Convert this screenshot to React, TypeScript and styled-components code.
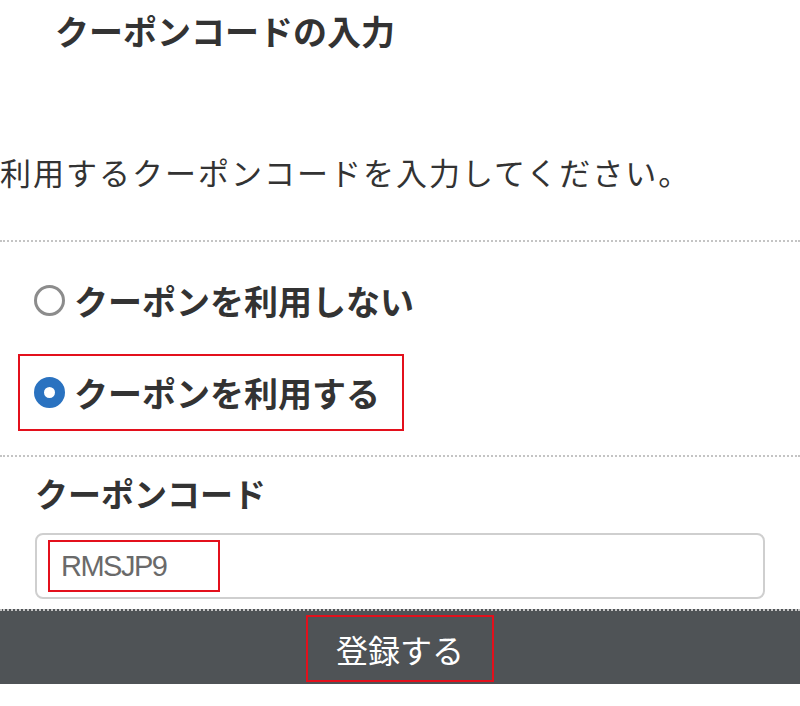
import React from 'react';
import styled, { createGlobalStyle } from 'styled-components';

const GlobalStyle = createGlobalStyle`
  html, body {
    margin: 0;
    padding: 0;
    background: #fff;
  }
  body {
    font-family: "Noto Sans CJK JP", "Noto Sans", sans-serif;
    color: #333;
  }
`;

const MARK = '#e3101c';

const App = () => {
  return (
    <Page>
      <GlobalStyle />
      <Title>クーポンコードの入力</Title>
      <Lead>利用するクーポンコードを入力してください。</Lead>

      <Options>
        <Option>
          <Radio />
          <OptionText>クーポンを利用しない</OptionText>
        </Option>
        <Option $marked>
          <Radio $checked />
          <OptionText>クーポンを利用する</OptionText>
        </Option>
      </Options>

      <CodeSection>
        <FieldLabel>クーポンコード</FieldLabel>
        <CodeField>
          <CodeValue>RMSJP9</CodeValue>
        </CodeField>
      </CodeSection>

      <SubmitBar>
        <SubmitButton type="button">登録する</SubmitButton>
      </SubmitBar>
    </Page>
  );
};

export default App;

const Page = styled.div`
  width: 800px;
  height: 706px;
  overflow: hidden;
  background: #fff;
`;

const Title = styled.h1`
  margin: 0;
  padding-left: 55px;
  height: 62px;
  font-size: 34px;
  line-height: 62px;
  font-weight: 700;
  letter-spacing: 0;
`;

const Lead = styled.p`
  margin: 80px 0 0;
  padding-bottom: 38px;
  font-size: 31px;
  line-height: 60px;
  font-weight: 400;
  letter-spacing: 2px;
  border-bottom: 2px dotted #c4c4c4;
  white-space: nowrap;
`;

const Options = styled.div`
  display: flex;
  flex-direction: column;
  align-items: flex-start;
  gap: 15px;
  padding: 20px 0 24px 18px;
  border-bottom: 2px dotted #c4c4c4;
`;

const Option = styled.label<{ $marked?: boolean }>`
  display: flex;
  align-items: center;
  gap: 9px;
  height: 77px;
  box-sizing: border-box;
  padding: 0 22px 0 14px;
  border: 2px solid ${(p) => (p.$marked ? MARK : 'transparent')};
`;

const Radio = styled.span<{ $checked?: boolean }>`
  flex: none;
  width: 31px;
  height: 31px;
  box-sizing: border-box;
  border-radius: 50%;
  background: #fff;
  border: ${(p) => (p.$checked ? '10px solid #2a72c0' : '3px solid #8c8c8c')};
`;

const OptionText = styled.span`
  font-size: 34px;
  line-height: 1;
  font-weight: 700;
  white-space: nowrap;
`;

const CodeSection = styled.div`
  padding: 11px 35px 10px;
`;

const FieldLabel = styled.div`
  font-size: 33px;
  line-height: 50px;
  font-weight: 700;
`;

const CodeField = styled.div`
  margin-top: 15px;
  height: 66px;
  box-sizing: border-box;
  padding: 4px 11px;
  border: 2px solid #cfcfcf;
  border-radius: 8px;
  display: flex;
  align-items: center;
`;

const CodeValue = styled.span`
  display: flex;
  align-items: center;
  width: 172px;
  height: 52px;
  box-sizing: border-box;
  padding-left: 11px;
  border: 2px solid ${MARK};
  font-family: "Liberation Sans", Arial, sans-serif;
  font-size: 29px;
  letter-spacing: -1.5px;
  color: #6a6a6a;
`;

const SubmitBar = styled.div`
  border-top: 2px dotted #c4c4c4;
  background: #4f5356;
  height: 75px;
  box-sizing: border-box;
  padding-top: 4px;
  display: flex;
  justify-content: center;
  align-items: flex-start;
`;

const SubmitButton = styled.button`
  width: 188px;
  height: 67px;
  border: 2px solid ${MARK};
  background: transparent;
  color: #fff;
  font-family: "Noto Sans CJK JP", "Noto Sans", sans-serif;
  font-size: 32px;
  font-weight: 400;
  padding: 0;
  cursor: pointer;
`;
